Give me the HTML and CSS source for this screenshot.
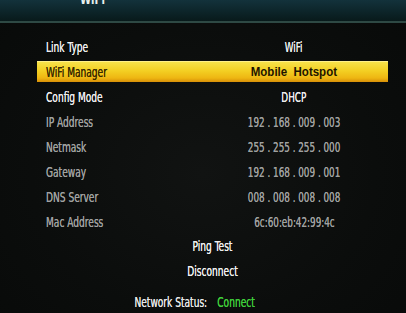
FILE: index.html
```html
<!DOCTYPE html>
<html>
<head>
<meta charset="utf-8">
<link rel="stylesheet" href="styles.css">
</head>
<body>
<div class="screen">
  <div class="header"><div class="title">WiFi</div></div>
  <div class="list">
    <div class="row bright"><span class="label">Link Type</span><span class="value">WiFi</span></div>
    <div class="row selected"><span class="label">WiFi Manager</span><span class="value">Mobile&nbsp;&nbsp;Hotspot</span></div>
    <div class="row bright"><span class="label">Config Mode</span><span class="value">DHCP</span></div>
    <div class="row dim"><span class="label">IP Address</span><span class="value">192 . 168 . 009 . 003</span></div>
    <div class="row dim"><span class="label">Netmask</span><span class="value">255 . 255 . 255 . 000</span></div>
    <div class="row dim"><span class="label">Gateway</span><span class="value">192 . 168 . 009 . 001</span></div>
    <div class="row dim"><span class="label">DNS Server</span><span class="value">008 . 008 . 008 . 008</span></div>
    <div class="row dim"><span class="label">Mac Address</span><span class="value">6c:60:eb:42:99:4c</span></div>
    <div class="action">Ping Test</div>
    <div class="action">Disconnect</div>
  </div>
  <div class="status"><span class="status-label">Network Status:</span><span class="status-value">Connect</span></div>
</div>
</body>
</html>
```
FILE: styles.css
```css
html, body {
  margin: 0;
  padding: 0;
  background: #0a0c0b;
}
.screen {
  width: 406px;
  height: 313px;
  overflow: hidden;
  background: radial-gradient(ellipse at 50% 55%, #111312 0%, #0b0d0c 60%, #080a09 100%);
  font-family: "DejaVu Sans Condensed", "DejaVu Sans", sans-serif;
  font-size: 14px;
  color: #e6e6e6;
}
.header {
  height: 21px;
  background: linear-gradient(180deg, #13323b 0%, #0d262b 50%, #081a1b 100%);
  border-bottom: 2px solid #2e4944;
  overflow: hidden;
}
.title {
  width: fit-content;
  margin-left: 80px;
  margin-top: -8px;
  line-height: 14px;
  font-size: 14px;
  font-weight: bold;
  color: #e8f0ee;
  transform: scaleX(0.8);
  transform-origin: left center;
}
.list {
  padding: 11px 18px 0 37px;
}
.row {
  display: grid;
  grid-template-columns: 154px 1fr;
  align-items: center;
  height: 25px;
  padding-left: 9px;
}
.label {
  justify-self: start;
  white-space: nowrap;
  transform: scaleX(0.72);
  transform-origin: left center;
}
.value {
  justify-self: center;
  white-space: nowrap;
  transform: scaleX(0.7);
  transform-origin: center;
}
.bright {
  color: #ededed;
  text-shadow: 0 0 0.6px #ededed;
}
.dim {
  color: #a0a1a0;
  text-shadow: 0 0 0.4px #a0a1a0;
}
.selected {
  height: 21px;
  margin: 2px 0;
  box-sizing: border-box;
  background: linear-gradient(180deg, #f7e24a 0%, #f3cf22 45%, #eeb612 80%, #d78f08 100%);
  border-top: 1px solid #fff08a;
  color: #3a2a00;
  text-shadow: 0 0 0.5px #3a2a00;
}
.selected .value {
  font-family: "Liberation Sans", Arial, sans-serif;
  font-weight: bold;
  font-size: 12.5px;
  color: #1e1400;
  text-shadow: none;
  transform: scaleX(0.92);
}
.action {
  height: 25px;
  line-height: 25px;
  text-align: center;
  color: #f0f0f0;
  text-shadow: 0 0 0.6px #f0f0f0;
  transform: scaleX(0.72);
}
.status {
  display: flex;
  align-items: center;
  gap: 14px;
  width: fit-content;
  margin: 9px auto 0;
  padding-right: 22px;
  height: 18px;
  color: #e8e8e8;
  text-shadow: 0 0 0.6px #e8e8e8;
  transform: scaleX(0.72);
}
.status-value {
  color: #3fcf3a;
  text-shadow: 0 0 0.6px #3fcf3a;
}
```
